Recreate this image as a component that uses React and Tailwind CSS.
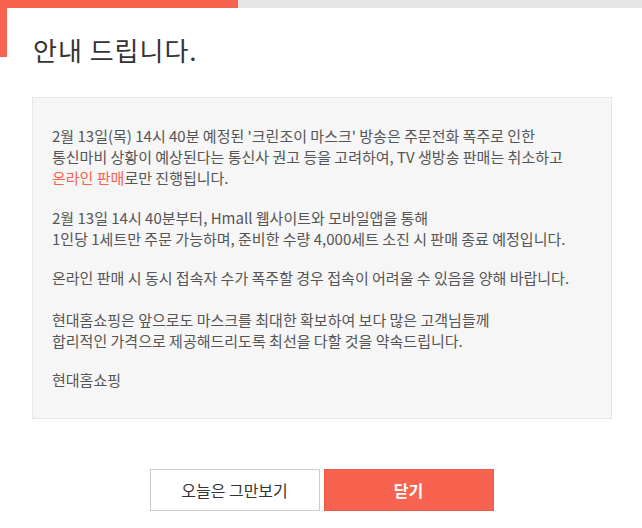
import React from 'react';

const font = { fontFamily: '"Noto Sans CJK KR", "Noto Sans", sans-serif' };

const App = () => {
  return (
    <div className="relative w-[642px] h-[528px] bg-white overflow-hidden" style={font}>
      {/* top accent bar */}
      <div className="flex h-[8px]">
        <div className="w-[238px] bg-[#f7634f]" />
        <div className="flex-1 bg-[#e5e5e5]" />
      </div>
      <div className="absolute left-0 top-0 w-[7px] h-[57px] bg-[#f7634f]" />

      <h1 className="ml-[33px] mt-[26px] text-[26px] leading-[32px] text-[#333] font-normal tracking-[1px]">
        안내 드립니다.
      </h1>

      <div className="ml-[32px] mt-[31px] w-[580px] h-[322px] bg-[#f6f6f6] border border-[#e8e8e8] pl-[19px] pt-[27px] text-[15px] leading-[21px] text-[#555]">
        <p>
          2월 13일(목) 14시 40분 예정된 '크린조이 마스크' 방송은 주문전화 폭주로 인한
          <br />
          통신마비 상황이 예상된다는 통신사 권고 등을 고려하여, TV 생방송 판매는 취소하고
          <br />
          <span className="text-[#f7634f]">온라인 판매</span>로만 진행됩니다.
        </p>
        <p className="mt-[19px]">
          2월 13일 14시 40분부터, Hmall 웹사이트와 모바일앱을 통해
          <br />
          1인당 1세트만 주문 가능하며, 준비한 수량 4,000세트 소진 시 판매 종료 예정입니다.
        </p>
        <p className="mt-[18px]">
          온라인 판매 시 동시 접속자 수가 폭주할 경우 접속이 어려울 수 있음을 양해 바랍니다.
        </p>
        <p className="mt-[21px]">
          현대홈쇼핑은 앞으로도 마스크를 최대한 확보하여 보다 많은 고객님들께
          <br />
          합리적인 가격으로 제공해드리도록 최선을 다할 것을 약속드립니다.
        </p>
        <p className="mt-[18px]">현대홈쇼핑</p>
      </div>

      <div className="flex justify-center gap-[4px] mt-[50px] pl-[1px]">
        <button className="w-[170px] h-[42px] border border-[#cccccc] bg-white text-[16px] text-[#333] font-normal">
          오늘은 그만보기
        </button>
        <button className="w-[170px] h-[42px] bg-[#f7634f] border border-[#ef5a45] text-[16px] text-white font-bold">
          닫기
        </button>
      </div>
    </div>
  );
};

export default App;
